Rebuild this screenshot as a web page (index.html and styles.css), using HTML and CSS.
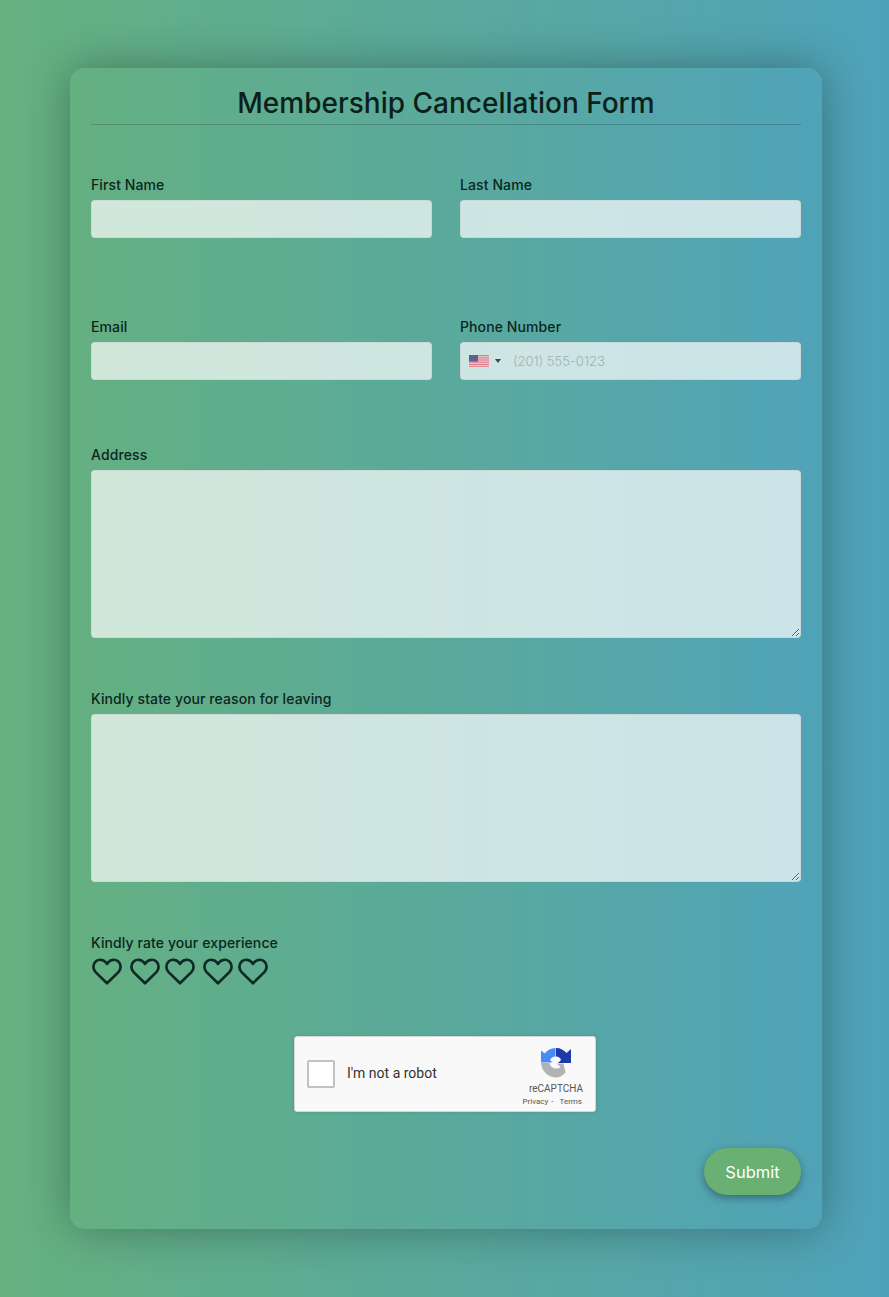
FILE: index.html
```html
<!DOCTYPE html>
<html lang="en">
<head>
    <meta charset="UTF-8">
    <title>Membership Cancellation Form</title>
    <link rel="stylesheet" href="styles.css">
</head>
<body>
    <div class="container">
        <h2>Membership Cancellation Form</h2>
        <form id="cancelForm">
            <div class="row row-first">
                <div class="field">
                    <label for="firstName">First Name</label>
                    <input type="text" id="firstName">
                </div>
                <div class="field">
                    <label for="lastName">Last Name</label>
                    <input type="text" id="lastName">
                </div>
            </div>
            <div class="row row-second">
                <div class="field">
                    <label for="email">Email</label>
                    <input type="text" id="email">
                </div>
                <div class="field">
                    <label for="phone">Phone Number</label>
                    <div class="phone">
                        <svg class="flag" viewBox="0 0 20 12" width="20" height="12">
                            <rect width="20" height="12" fill="#f1d5da"/>
                            <path d="M0 .5h20M0 2.300h20M0 4.100h20M0 5.900h20M0 7.700h20M0 9.500h20M0 11.300h20" stroke="#e2687c" stroke-width="1"/>
                            <rect width="9" height="6.600" fill="#474a82"/>
                        </svg>
                        <span class="caret"></span>
                        <input type="text" id="phone" placeholder="(201) 555-0123">
                    </div>
                </div>
            </div>
            <div class="field field-address">
                <label for="address">Address</label>
                <textarea id="address"></textarea>
            </div>
            <div class="field field-reason">
                <label for="reason">Kindly state your reason for leaving</label>
                <textarea id="reason"></textarea>
            </div>
            <div class="rating">
                <label>Kindly rate your experience</label>
                <div class="hearts">
                    <svg class="heart" viewBox="0 0 30 27"><path d="M15 25.200 3.600 14.100C.6 11 .7 6.200 3.700 3.500c3-2.600 7.400-2.200 9.900.7L15 5.900l1.400-1.700c2.500-2.900 6.900-3.300 9.900-.7 3 2.700 3.100 7.500.1 10.600z"/></svg>
                    <svg class="heart" viewBox="0 0 30 27"><path d="M15 25.200 3.600 14.100C.6 11 .7 6.200 3.700 3.500c3-2.600 7.400-2.200 9.900.7L15 5.900l1.400-1.700c2.500-2.900 6.900-3.300 9.900-.7 3 2.700 3.100 7.500.1 10.600z"/></svg>
                    <svg class="heart" viewBox="0 0 30 27"><path d="M15 25.200 3.600 14.100C.6 11 .7 6.200 3.700 3.500c3-2.600 7.400-2.200 9.900.7L15 5.900l1.400-1.700c2.500-2.900 6.900-3.300 9.900-.7 3 2.700 3.100 7.500.1 10.600z"/></svg>
                    <svg class="heart" viewBox="0 0 30 27"><path d="M15 25.200 3.600 14.100C.6 11 .7 6.200 3.700 3.500c3-2.600 7.400-2.200 9.900.7L15 5.900l1.400-1.700c2.500-2.900 6.900-3.300 9.900-.7 3 2.700 3.100 7.500.1 10.600z"/></svg>
                    <svg class="heart" viewBox="0 0 30 27"><path d="M15 25.200 3.600 14.100C.6 11 .7 6.200 3.700 3.500c3-2.600 7.400-2.200 9.900.7L15 5.900l1.400-1.700c2.500-2.900 6.900-3.300 9.900-.7 3 2.700 3.100 7.500.1 10.600z"/></svg>
                </div>
            </div>
            <div class="captcha-wrap">
                <div class="captcha">
                    <span class="captcha-box"></span>
                    <span class="captcha-text">I'm not a robot</span>
                    <div class="captcha-brand">
                        <svg class="captcha-logo" viewBox="0 0 30 30" width="30" height="30">
                            <path d="M14.500 0C10 0 6.200 2.200 3.800 5.500L0 2.500V14.500H11.500L9 12C10 10 12 8.500 14.500 8.500z" fill="#4a8af4"/>
                            <path d="M15 0C19.500 0 23 2 25.500 5L30 1V15H17L20 12C19.500 10 17.500 8.500 15 8.500z" fill="#1c3aa9"/>
                            <path d="M0 15H8.500C9 18 11.500 20.500 15 20.500C17 20.500 18.500 20 19.500 19L15.500 15.500H22.500L24.500 24.500C22 27.500 18.500 29.500 15 29.500C7 29.500 .5 23 0 15z" fill="#b2b2b2"/>
                        </svg>
                        <span class="captcha-name">reCAPTCHA</span>
                        <span class="captcha-links">Privacy<i>-</i>Terms</span>
                    </div>
                </div>
            </div>
            <div class="actions">
                <button type="submit" class="submit-btn">Submit</button>
            </div>
        </form>
    </div>
</body>
</html>
```

FILE: styles.css
```css
* {
    margin: 0;
    padding: 0;
    box-sizing: border-box;
    font-family: 'Inter', 'Noto Sans', sans-serif;
}

body {
    min-height: 100vh;
    padding: 68px 67px 68px 70px;
    background: linear-gradient(90deg, #65b17f 0%, #4fa2ba 100%);
}

.container {
    height: 1161px;
    padding: 13px 21px 0;
    border-radius: 15px;
    background: linear-gradient(90deg, #64b081 0%, #50a3b8 100%);
    box-shadow: 0 0 45px rgba(0, 0, 0, 0.32);
}

h2 {
    height: 44px;
    border-bottom: 1px solid rgba(0, 0, 0, 0.18);
    color: #0c1f1a;
    font-size: 28px;
    font-weight: 500;
    line-height: 44px;
    text-align: center;
}

.row {
    display: grid;
    grid-template-columns: 341px 341px;
    gap: 28px;
}

.row-first {
    margin-top: 52px;
}

.row-second {
    margin-top: 81px;
}

.field {
    display: flex;
    flex-direction: column;
}

label {
    display: block;
    height: 15px;
    color: #0c261e;
    font-size: 14px;
    font-weight: 500;
    line-height: 15px;
    letter-spacing: 0.1px;
}

input, textarea {
    display: block;
    width: 100%;
    margin-top: 8px;
    border: 1px solid rgba(204, 204, 204, 0.55);
    border-radius: 4px;
    outline: none;
    background: rgba(255, 255, 255, 0.7);
}

input {
    height: 38px;
}

textarea {
    height: 168px;
}

.phone {
    display: flex;
    align-items: center;
    height: 38px;
    margin-top: 8px;
    padding-left: 8px;
    border: 1px solid rgba(204, 204, 204, 0.55);
    border-radius: 4px;
    background: rgba(255, 255, 255, 0.7);
}

.phone input {
    height: 36px;
    margin: 0 0 0 12px;
    border: none;
    background: transparent;
    font-size: 13px;
}

.phone input::placeholder {
    color: #9fb2b5;
    font-weight: 300;
}

.flag {
    flex: none;
    opacity: 0.85;
}

.caret {
    flex: none;
    width: 0;
    height: 0;
    margin-left: 6px;
    border-top: 4px solid #444;
    border-left: 3px solid transparent;
    border-right: 3px solid transparent;
}

.field-address {
    margin-top: 67px;
}

.field-reason {
    margin-top: 53px;
}

.rating {
    margin-top: 53px;
}

.hearts {
    display: flex;
    gap: 5px;
    margin-top: 8px;
    padding-left: 1px;
}

.heart {
    width: 30px;
    height: 27px;
    fill: none;
    stroke: #0f2a26;
    stroke-width: 2.700;
    stroke-linejoin: round;
}

.heart:nth-child(even) {
    margin-left: 3px;
}

.captcha-wrap {
    display: flex;
    justify-content: center;
    margin-top: 51px;
}

.captcha {
    display: flex;
    align-items: center;
    width: 302px;
    height: 76px;
    margin-left: -2px;
    padding-left: 12px;
    border: 1px solid #d6d6d6;
    border-radius: 3px;
    background: #f9f9f9;
    box-shadow: 0 0 4px rgba(0, 0, 0, 0.1);
}

.captcha-box {
    width: 28px;
    height: 28px;
    border: 2px solid #c1c1c1;
    border-radius: 2px;
    background: #fff;
}

.captcha-text {
    margin-left: 12px;
    padding-bottom: 2px;
    color: #333;
    font-family: 'Roboto', sans-serif;
    font-size: 14px;
}

.captcha-brand {
    display: flex;
    flex-direction: column;
    align-items: flex-end;
    margin-left: auto;
    margin-right: 13px;
}

.captcha-logo {
    margin-top: 6px;
    margin-right: 11px;
}

.captcha-name {
    margin-top: 5px;
    margin-right: -1px;
    color: #555;
    font-family: 'Roboto', sans-serif;
    font-size: 10px;
    line-height: 12px;
}

.captcha-links {
    margin-top: 2px;
    color: #555;
    font-family: 'Roboto', sans-serif;
    font-size: 8px;
    line-height: 10px;
    white-space: nowrap;
}

.captcha-links i {
    margin: 0 6px 0 3px;
    font-style: normal;
    font-family: 'Roboto', sans-serif;
}

.actions {
    display: flex;
    justify-content: flex-end;
    margin-top: 36px;
}

.submit-btn {
    width: 97px;
    height: 47px;
    border: none;
    border-radius: 24px;
    background: #6ab072;
    box-shadow: 0 3px 8px rgba(0, 0, 0, 0.35);
    color: #fff;
    font-size: 16.500px;
    font-weight: 400;
    cursor: pointer;
}
```
